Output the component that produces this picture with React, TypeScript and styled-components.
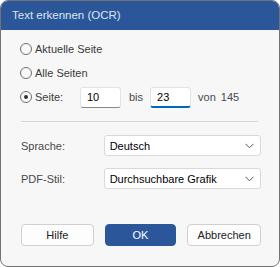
import React, { useState } from "react"
import styled, { createGlobalStyle } from "styled-components"

const GlobalStyle = createGlobalStyle`
  html, body {
    margin: 0;
    padding: 0;
    background: #ffffff;
  }
  * {
    box-sizing: border-box;
  }
`

const Window = styled.div`
  width: 280px;
  height: 267px;
  border: 1px solid #737373;
  border-radius: 8px;
  overflow: hidden;
  background: #f7f7f7;
  display: flex;
  flex-direction: column;
  font-family: "Liberation Sans", Arial, sans-serif;
  font-size: 11px;
  color: #333333;
`

const TitleBar = styled.div`
  height: 29px;
  background: #2b579a;
  color: #dce4f0;
  font-size: 11.5px;
  display: flex;
  align-items: center;
  padding-left: 11px;
  padding-bottom: 2px;
`

const Body = styled.div`
  flex: 1;
  padding: 7px 18px 20px 19px;
  display: flex;
  flex-direction: column;
`

const RadioRow = styled.label`
  height: 24px;
  display: flex;
  align-items: center;
  gap: 3px;
  cursor: default;
`

const RadioCircle = styled.span<{ checked?: boolean }>`
  width: 12px;
  height: 12px;
  border-radius: 50%;
  border: 1px solid #6e6e6e;
  background: #fafafa;
  display: flex;
  align-items: center;
  justify-content: center;
  flex-shrink: 0;
  &::after {
    content: "";
    width: 4px;
    height: 4px;
    border-radius: 50%;
    background: #333333;
    display: ${({ checked }) => (checked ? "block" : "none")};
  }
`

const RadioText = styled.span<{ width?: string }>`
  width: ${({ width }) => width || "auto"};
  color: #3a3a3a;
`

const NumberInput = styled.input<{ focused?: boolean }>`
  width: 41px;
  height: 21px;
  border: 1px solid #e3e3e3;
  border-bottom: ${({ focused }) =>
    focused ? "2px solid #0067c0" : "1px solid #8a8a8a"};
  border-radius: 3px;
  background: #ffffff;
  font-family: inherit;
  font-size: 11px;
  color: #000000;
  padding: 0 0 0 6px;
  outline: none;
`

const Between = styled.span`
  margin: 0 4px 0 5px;
  color: #4a4a4a;
`

const Total = styled.span`
  margin-left: 4px;
  color: #4a4a4a;
  word-spacing: 2px;
  white-space: nowrap;
`

const Separator = styled.div`
  height: 1px;
  background: #d6d6d6;
  margin: 12px 3px 13px 1px;
`

const FieldRow = styled.div`
  display: flex;
  align-items: center;
  margin-bottom: 12px;
`

const FieldLabel = styled.span`
  width: 84px;
  padding-left: 1px;
  color: #4a4a4a;
`

const Select = styled.div`
  width: 158px;
  height: 21px;
  border: 1px solid #d9d9d9;
  border-radius: 3px;
  background: #ffffff;
  display: flex;
  align-items: center;
  justify-content: space-between;
  padding: 0 6px 0 5px;
  color: #000000;
`

const Chevron = styled.svg`
  width: 9px;
  height: 6px;
`

const ButtonRow = styled.div`
  margin-top: auto;
  display: flex;
  gap: 11px;
  padding-left: 1px;
`

const Button = styled.button<{ primary?: boolean; width: string }>`
  width: ${({ width }) => width};
  height: 22px;
  border-radius: 4px;
  border: 1px solid ${({ primary }) => (primary ? "#2b579a" : "#d0d0d0")};
  background: ${({ primary }) => (primary ? "#2b579a" : "#fdfdfd")};
  color: ${({ primary }) => (primary ? "#ffffff" : "#222222")};
  font-family: inherit;
  font-size: 11px;
  padding: 0;
`

const ChevronDown = () => (
  <Chevron viewBox="0 0 9 6">
    <path d="M0.5 0.8 L4.5 4.8 L8.5 0.8" fill="none" stroke="#555" strokeWidth="1" />
  </Chevron>
)

export default function App() {
  const [from, setFrom] = useState("10")
  const [to, setTo] = useState("23")
  return (
    <>
      <GlobalStyle />
      <Window>
        <TitleBar>Text erkennen (OCR)</TitleBar>
        <Body>
          <RadioRow>
            <RadioCircle />
            <RadioText>Aktuelle Seite</RadioText>
          </RadioRow>
          <RadioRow>
            <RadioCircle />
            <RadioText>Alle Seiten</RadioText>
          </RadioRow>
          <RadioRow>
            <RadioCircle checked />
            <RadioText width="42px">Seite:</RadioText>
            <NumberInput value={from} onChange={(e) => setFrom(e.target.value)} />
            <Between>bis</Between>
            <NumberInput focused value={to} onChange={(e) => setTo(e.target.value)} />
            <Total>von 145</Total>
          </RadioRow>
          <Separator />
          <FieldRow>
            <FieldLabel>Sprache:</FieldLabel>
            <Select>
              Deutsch
              <ChevronDown />
            </Select>
          </FieldRow>
          <FieldRow>
            <FieldLabel>PDF-Stil:</FieldLabel>
            <Select>
              Durchsuchbare Grafik
              <ChevronDown />
            </Select>
          </FieldRow>
          <ButtonRow>
            <Button width="73px">Hilfe</Button>
            <Button primary width="72px">OK</Button>
            <Button width="74px">Abbrechen</Button>
          </ButtonRow>
        </Body>
      </Window>
    </>
  )
}
